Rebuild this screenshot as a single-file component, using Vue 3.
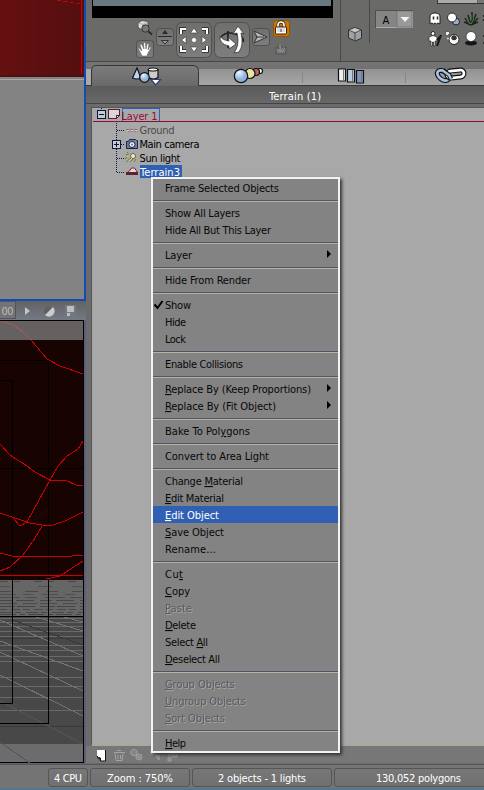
<script setup>
const item = (text, w, extra = {}) => ({ text, w, ...extra })
const groups = [
  [item('Frame Selected Objects', 114)],
  [item('Show All Layers', 75), item('Hide All But This Layer', 106)],
  [item('Layer', 27, { sub: true })],
  [item('Hide From Render', 86)],
  [item('Show', 26, { check: true }), item('Hide', 21), item('Lock', 21)],
  [item('Enable Collisions', 78)],
  [item('Replace By (Keep Proportions)', 146, { sub: true, key: 0 }), item('Replace By (Fit Object)', 111, { sub: true, key: 0 })],
  [item('Bake To Polygons', 85, { key: 11 })],
  [item('Convert to Area Light', 104)],
  [item('Change Material', 78, { key: 7 }), item('Edit Material', 59, { key: 0 }), item('Edit Object', 54, { key: 0, active: true }), item('Save Object', 59, { key: 0 }), item('Rename...', 51)],
  [item('Cut', 18, { key: 2 }), item('Copy', 25, { key: 0 }), item('Paste', 27, { key: 0, off: true }), item('Delete', 31, { key: 0 }), item('Select All', 43, { key: 7 }), item('Deselect All', 55, { key: 0 })],
  [item('Group Objects', 70, { key: 0, off: true }), item('Ungroup Objects', 81, { key: 0, off: true }), item('Sort Objects', 60, { key: 0, off: true })],
  [item('Help', 21, { key: 0 })],
]
const split = (m) => m.key === undefined ? [m.text, '', ''] : [m.text.slice(0, m.key), m.text[m.key], m.text.slice(m.key + 1)]
const dashRows = [
  [581, '8 6 6 14', '#484848'], [586, '10 28 14 20', '#505050'], [591, '11 14 13 9', '#4a4a4a'], [594, '16 7 10 9', '#4e4e4e'],
  [597, '20 5 12 8', '#4b4b4b'], [600, '12 4 18 6', '#474747'], [603, '17 6 14 3', '#4a4a4a'],
  [606, '15 2 18 5', '#444'], [609, '7 4 9 3', '#484848'], [612, '12 3 6 5', '#484848'], [614, '16 4 5 3', '#444'],
]
const rows = [618, 622, 626, 631, 636, 645, 650, 656, 661, 677, 686, 697, 710]
</script>

<template>
  <div class="app">
    <main class="work">
      <section class="left">
        <div class="view top">
          <svg width="84" height="299" viewBox="0 0 84 299">
            <defs><linearGradient id="red" x1="0" x2="1"><stop offset="0" stop-color="#661011" /><stop offset="1" stop-color="#540f0f" /></linearGradient></defs>
            <rect width="84" height="299" fill="#838383" />
            <rect width="84" height="77" fill="url(#red)" />
            <rect y="75" width="84" height="2" fill="#4b100f" />
            <rect y="79" width="84" height="1" fill="#aaa" />
            <path d="M57 .5h4M63 1.500h5M70 2.500h4M76 3.500h4M83 4.500h1M81.500 0V43M81.500 44V74" stroke="#c80000" fill="none" />
          </svg>
        </div>
        <div class="viewbar">
          <span class="frames"><svg width="14" height="16"><text class="ui" x="1.5" y="13" textLength="12">00</text></svg></span>
          <svg width="66" height="18" viewBox="0 0 66 18">
            <path d="M9 6v8l5-4z" fill="#c4c4c4" />
            <circle cx="32.500" cy="10" r="4.500" fill="#606060" /><path d="M29 14 37 6a5 5 0 0 1-8 8z" fill="#ccc" />
            <path d="M49 4h11v12H49z" fill="#737783" /><path d="M51 5h7v6h-7zM51 12h3v3h-3z" fill="#bebebe" />
          </svg>
        </div>
        <svg class="scene" width="86" height="443" viewBox="0 320 86 443" shape-rendering="crispEdges">
          <rect y="320" width="86" height="443" fill="#5b5f78" />
          <rect y="320" width="84" height="443" fill="#000" />
          <rect y="321" width="83" height="19" fill="#666161" />
          <rect y="340" width="83" height="240" fill="#180303" />
          <path d="M32 521 53 500l-8 17z" fill="#2c0504" opacity=".4" />
          <rect y="580" width="83" height="36" fill="#666" />
          <rect y="616" width="83" height="128" fill="#484848" />
          <rect y="744" width="83" height="18" fill="#6c6c6c" />
          <path v-for="[y, dash, color] in dashRows" :key="y" :d="`M0 ${y}.500H83`" :stroke="color" :stroke-dasharray="dash" />
          <path v-for="y in rows" :key="y" :d="`M0 ${y}.500H83`" stroke="#696969" />
          <path d="M0 638.500H83M0 726.500H83" stroke="#393939" />
          <g fill="none" stroke="#747474">
            <path d="M64 617 83 622M36 617 83 631M0 620 83 656M0 641 83 671M0 652 83 691M0 675 83 716" />
            <path d="M12 620 83 645" stroke="#383838" />
            <path d="M0 701 83 744M0 742 30 763" stroke="#555" />
          </g>
          <g fill="none" stroke="#000"><path d="M0 360.500H48.500V723.500H0M0 380.500H12.500V703.500H0M0 468.500H83M0 616.500H83" /></g>
          <path d="M0 321 8 323 15 326 23 332 31 340" fill="none" stroke="#a05a5a" />
          <g fill="none" stroke="#c80000">
            <path d="M31 340 47 359 60 366 83 374M0 444 10 455 27 466 35 472 50 480H65L76 485H83M83 441 78 449 67 456 58 466 50 480 27 522 20 526 13 518M0 513 15 518 30 523 42 525H53L65 521 83 512M0 553 12 556H72L83 555M42 526 35 538 23 555 10 567 0 571M0 575.500H83M46 579 60 576 83 561" />
          </g>
          <rect x="83" y="320" width="1" height="443" fill="#000" />
        </svg>
      </section>

      <section class="right">
        <header class="tools">
          <div class="preview-tools">
            <div class="preview"></div>
            <svg width="254" height="43" viewBox="86 18 254 43">
              <defs>
                <linearGradient id="btn" x1="0" y1="0" x2="0" y2="1"><stop stop-color="#6f6f6d" /><stop offset="1" stop-color="#7e7e7e" /></linearGradient>
              </defs>
              <g stroke="#505050" fill="url(#btn)">
                <rect x="136.500" y="40.500" width="17" height="17" rx="3" /><rect x="156.500" y="28.500" width="17" height="17" rx="3" />
                <rect x="176.500" y="22.500" width="35" height="35" rx="6" /><rect x="214.500" y="22.500" width="35" height="35" rx="6" /><rect x="252.500" y="28.500" width="17" height="17" rx="3" />
                <rect x="273.500" y="20.500" width="16" height="16" rx="3" fill="#cf7400" stroke="#965400" />
              </g>
              <path d="M138 23l4-2.500 6 1v7l-5 2-5-3z" fill="#ddd" stroke="#555" /><path d="M138 23l5 1.500v5M143 24.500l5-2.500" fill="none" stroke="#999" stroke-width=".7" /><circle cx="145.500" cy="28.500" r="3.700" fill="#777" stroke="#333" /><path d="M148.500 31.500l3.500 3" stroke="#2b2b2b" stroke-width="2" />
              <path d="M138 48q1-1 2 1l2 2-2-6q1-2 2 0l2 4-.5-6q1-1 2 0l.5 6 1-5q1-1 2 0l-1 6 2-3q2-1 1 1l-3 5-1 3h-5l-2-4z" fill="#fff" stroke="#555" stroke-width=".5" />
              <path d="M158 36.500h14" stroke="#292929" /><path d="M162 34h6l-3-4z" fill="#2b2b2b" /><path d="M161.500 40.500h7l-3.500 3.500z" fill="#999" stroke="#333" />
              <path d="M181 34v-5h5M202 29h5v5M207 46v5h-5M186 51h-5v-5" fill="none" stroke="#222" stroke-width="3.500" /><path d="M181 34v-5h5M202 29h5v5M207 46v5h-5M186 51h-5v-5" fill="none" stroke="#fff" stroke-width="2" /><path d="M190.500 33h7l-3.500-5zM190.500 47h7l-3.500 5zM186 36.500v7l-4.500-3.500zM202 36.500v7l4.500-3.500z" fill="#fff" stroke="#333" stroke-width=".6" /><circle cx="194" cy="40" r="2.500" fill="#fff" stroke="#333" stroke-width=".5" />
              <path d="M221 37q5-6 14-3 10 3 8 8M228 31v17" stroke="#222" stroke-width="1.700" fill="none" />
              <path d="M220 36q2 4 9 5l-1-4 8 7-7 5v-3q-10-2-9-10z" fill="#fff" stroke="#333" stroke-width=".8" />
              <path d="M233 34l5-8 6 8-3-1q3 12-2 19l-5 1q6-8 3-20z" fill="#fff" stroke="#333" stroke-width=".8" />
              <path d="M254 31l13 6-13 6 3-6z" fill="#b8b8b8" stroke="#333" /><path d="M256 37h8" stroke="#333" />
              <path d="M278 28v-3q0-3 3-3t3 3v3" fill="none" stroke="#222" stroke-width="3" /><path d="M278 28v-3q0-3 3-3t3 3v3" fill="none" stroke="#fff" stroke-width="1.700" /><rect x="275.500" y="27" width="11" height="7" rx="1" fill="#fff" stroke="#352008" /><path d="M277 29h8M277 31h8" stroke="#bbb" /><path d="M281 29v3" stroke="#444" />
              <path d="M276 47l3 2v-5l3 3v3l4-3v7h-10z" fill="#777" stroke="#505050" /><path d="M280 44v6M277 49l3 3 3-4M285 48l-3 4" stroke="#999" fill="none" />
            </svg>
          </div>
          <svg class="library" width="144" height="61" viewBox="340 0 144 61">
            <path d="M340 0V61" stroke="#484848" stroke-width="2" />
            <path d="M369.500 0V43" stroke="#484848" />
            <path d="M437.500 0V3.500H484" fill="none" stroke="#353535" /><path d="M438 0h39v3h-39z" fill="#aaa" /><path d="M478 0h6v3h-6z" fill="#777" />
            <path d="M348.500 30l6-2.500 7 2.500v8l-6 3-7-3z" fill="#9da2a5" stroke="#303030" /><path d="M349 30l6 3 6-3M355 33v8" stroke="#4b4b4b" fill="none" /><path d="M350 30l5-2 5 2-5 2z" fill="#c4c6c8" />
            <rect x="375.500" y="10.500" width="37" height="17" fill="#858585" stroke="#4f4f4f" /><path d="M376 27.500h36.500V11" stroke="#aaa" fill="none" /><rect x="397" y="11" width="15" height="16" fill="#999" stroke="#666" stroke-width=".6" />
            <text class="ui" x="382.500" y="24">A</text><path d="M400.500 17h9l-4.500 5z" fill="#f3f3f3" />
            <path d="M430 24V17q0-4 5-4t5 4v7l-2-1-1.500 1-1.500-1-1.500 1-1.500-1z" fill="#fff" stroke="#222" /><path d="M433.500 16.500v3M437.500 16.500v3" stroke="#222" stroke-width="1.500" />
            <circle cx="456" cy="21.500" r="3.500" fill="#9cabcb" stroke="#222" /><circle cx="452" cy="17.500" r="4.500" fill="#fff" stroke="#222" />
            <path d="M465 18l4 7M468 15l3 10M472 12v13M476 14l-4 11M478 18l-6 7M464 22l7 3 7-3" stroke="#172818" stroke-width="1.500" fill="none" /><path d="M467 20l4 4M474 19l-3 5M471 15v5" stroke="#57794e" fill="none" />
            <circle cx="433" cy="33.500" r="2" fill="#fff" stroke="#222" /><path d="M429 37q4-3 8 0v4h-2v5h-1.500v-4h-1v4H431v-5h-2z" fill="#fff" stroke="#222" stroke-width=".7" /><path d="M441 35l-4 11M437 40l4-4" stroke="#161616" stroke-width="2" />
            <path d="M445.500 31.500h4v2l-2 2h-2z" fill="#eee" stroke="#333" stroke-width=".6" /><circle cx="454" cy="39.500" r="5" fill="#fff" stroke="#222" /><path d="M452 36q4-2 5 2-1 3-4 2t-1-4z" fill="#333" /><circle cx="448" cy="38.500" r="1" fill="#ddd" />
            <ellipse cx="471" cy="43" rx="6" ry="2.500" fill="#151515" /><circle cx="471" cy="36.500" r="5" fill="#fff" stroke="#333" stroke-width=".8" />
            <path d="M483 16h1M483 20h1M483 36h1M483 43h1" stroke="#292929" stroke-width="2" />
          </svg>
        </header>

        <nav class="tabs">
          <svg width="398" height="24" viewBox="86 62 398 24">
            <defs><linearGradient id="tab" x1="0" y1="0" x2="0" y2="1"><stop stop-color="#7c7c7c" /><stop offset="1" stop-color="#696969" /></linearGradient><linearGradient id="idle" x1="0" y1="0" x2="0" y2="1"><stop stop-color="#929292" /><stop offset="1" stop-color="#a7a7a7" /></linearGradient><radialGradient id="ball" cx=".35" cy=".25"><stop stop-color="#eef6ff" /><stop offset="1" stop-color="#8eb3da" /></radialGradient></defs>
            <path d="M86 69h5v16h-5z" fill="#aaa" /><path d="M198 69h286v16H198z" fill="url(#idle)" />
            <path d="M91.500 86V71q0-5.500 5-5.500H193q5.500 0 5.500 6V86z" fill="url(#tab)" stroke="#353535" /><path d="M92 85.500h106" stroke="#696969" /><path d="M86 85.500h5.500M198.500 85.500H484" stroke="#383838" />
            <path d="M302.500 73v10M405.500 73v10" stroke="#858585" />
            <g stroke="#111" stroke-width="1.200">
              <path d="M137 68l4 10q-4 2-8.500 0z" fill="#b8d4ef" /><path d="M148.500 69.500v8q5 3 9.500 0v-8z" fill="#ccc" /><ellipse cx="153" cy="69.500" rx="4.700" ry="1.500" fill="#fff" /><circle cx="144.500" cy="77.500" r="4.800" fill="url(#ball)" /><path d="M151 79.500h9.500l-4.750 5.500z" fill="#fff" stroke="#343b75" />
              <circle cx="260" cy="71" r="2.500" fill="#fff" /><circle cx="256" cy="72" r="3.500" fill="#b76463" /><circle cx="250" cy="73.500" r="5" fill="#eae3a3" /><circle cx="241" cy="76" r="6.700" fill="url(#ball)" />
              <path d="M338.500 69h7v12h-7z" fill="#eee" /><path d="M347.500 69.500h7v12.500h-7z" fill="#b9cbe2" /><path d="M356.500 70.500h7V83h-7z" fill="#8295b6" />
              <path d="M343.500 69.500V81M352.500 70V82M361.500 71V83" stroke="#6e7788" stroke-width="1" />
            </g>
            <g fill="none"><ellipse cx="443" cy="75.500" rx="6.500" ry="4" transform="rotate(38 443 75.500)" stroke="#111" stroke-width="5" /><ellipse cx="443" cy="75.500" rx="6.500" ry="4" transform="rotate(38 443 75.500)" stroke="#a9c3e5" stroke-width="2.700" /><rect x="447" y="70.500" width="17" height="7" rx="3.500" transform="rotate(-6 456 74)" stroke="#111" stroke-width="5" /><rect x="447" y="70.500" width="17" height="7" rx="3.500" transform="rotate(-6 456 74)" stroke="#fff" stroke-width="2.700" /><path d="M443 70l6 5 2 4" stroke="#111" stroke-width="4.500" /><path d="M442 70l7 5 2 4" stroke="#a9c3e5" stroke-width="2.500" /></g>
          </svg>
        </nav>
        <div class="title"><svg width="52" height="16"><text class="ui white" x="0" y="13" textLength="52">Terrain (1)</text></svg></div>

        <div class="tree">
          <svg width="392" height="72" viewBox="92 108 392 72" shape-rendering="crispEdges">
            <path d="M116.500 123V172M117 130.500H124M117 144.500H124M117 158.500H124M117 172.500H124M101.500 108v2" stroke="#111b3d" stroke-dasharray="1 1" fill="none" />
            <rect x="122.500" y="108.500" width="37" height="13" fill="none" stroke="#2b64bc" />
            <rect x="97.500" y="110.500" width="8" height="8" fill="#c8c8c8" stroke="#08153e" stroke-width="1" /><path d="M99 114.500h5" stroke="#08153e" />
            <path d="M108.500 109.500h11v6l-3 3h-8z" fill="#ddd4d7" stroke="#591b30" /><path d="M119 115h-3v3" fill="#fff" stroke="#591b30" />
            <path d="M93 121.500H484" stroke="#8b0d36" />
            <rect x="112.500" y="140.500" width="8" height="8" fill="#ccc" stroke="#08153e" /><path d="M114 144.500h5M116.500 142v5" stroke="#08153e" />
            <g shape-rendering="auto">
              <path d="M126 129.500h11" stroke="#876770" stroke-width="1" stroke-dasharray="3 1" /><path d="M127 130.500h10" stroke="#e0c9cc" stroke-dasharray="2 2" /><path d="M128 131.500h10" stroke="#9d7b84" stroke-dasharray="2 1" />
              <path d="M126.500 141.500h2l1-2h6l1 1h1v8h-11z" fill="#747e9e" stroke="#172648" /><circle cx="132" cy="144.500" r="3" fill="#f0f2f5" stroke="#172648" /><circle cx="132" cy="144.500" r="1" fill="#5e719d" />
              <circle cx="133" cy="156" r="2.500" fill="#efefcc" stroke="#63643a" /><path d="M126 155l3-1M125 159l5-4M126 162l5-4M130 162l3-3M134 162l2-3M127 153l1-1" stroke="#74762f" /><path d="M127 157l3-2M129 161l3-3" stroke="#d5d896" />
              <path d="M126.500 173l3-2 2-3h3l2 3 1 2z" fill="#e7d8dc" stroke="#692c3c" /><path d="M126 172h12v3h-12z" fill="#5b2434" />
              <rect x="140" y="165" width="42" height="13" fill="#3060b4" />
              <text class="ui" x="121.500" y="120" textLength="36" fill="#970c3c">Layer 1</text><text class="ui" x="139.500" y="134" textLength="35" fill="#484848">Ground</text><text class="ui" x="139.500" y="148" textLength="60">Main camera</text><text class="ui" x="139.500" y="162" textLength="41">Sun light</text><text class="ui white" x="140" y="176" textLength="40">Terrain3</text>
            </g>
          </svg>
        </div>
        <footer class="tree-actions">
          <svg width="100" height="17" viewBox="92 747 100 17">
            <path d="M97 751h8v11h-4l-4-4z" fill="#fff" /><path d="M105.500 751v11h-5v-3h-3v-2" stroke="#111" fill="none" /><path d="M97 758h3v4" fill="#333" />
            <path d="M115 754.500l1 7h6l1-7M114 753.500h11M117 751.500h4M118 756v4M120.500 756v4" fill="none" stroke="#a4a4a4" />
            <g fill="#858585" stroke="#a0a0a0"><path d="M131 752l3-2 3 2v3l-3 2-3-2z" /><circle cx="139" cy="758" r="3" /><circle cx="139" cy="758" r="1" /><path d="M151 750h6v5h-6zM156 756h3v5l-3-3zM168 759h3v3h-3zM172 754h5v4h-5zM169 758v-5h3" /></g>
          </svg>
        </footer>
      </section>
    </main>

    <footer class="status">
      <div class="cell cpu"><svg width="28" height="15"><text class="ui white" x="0" y="12" textLength="28">4 CPU</text></svg></div>
      <div class="cell zoom"><svg width="66" height="15"><text class="ui white" x="0" y="12" textLength="66">Zoom : 750%</text></svg></div>
      <div class="cell count"><svg width="88" height="15"><text class="ui white" x="0" y="12" textLength="88">2 objects - 1 lights</text></svg></div>
      <div class="cell polys"><svg width="86" height="15"><text class="ui white" x="0" y="12" textLength="85">130,052 polygons</text></svg></div>
    </footer>

    <div class="menu">
      <div v-for="(group, g) in groups" :key="g" class="group">
        <div v-for="m in group" :key="m.text" class="item" :class="{ active: m.active, off: m.off }">
          <svg class="mark" width="12" height="17"><path v-if="m.check" d="M1.500 8.500l3 3.500 5-7" fill="none" stroke="#000" stroke-width="2" /></svg>
          <svg class="label" width="150" height="17"><text class="ui" x="0" y="13" :textLength="m.w">{{ split(m)[0] }}<tspan class="key">{{ split(m)[1] }}</tspan>{{ split(m)[2] }}</text></svg>
          <svg v-if="m.sub" class="arrow" width="5" height="9"><path d="M0 0v8l4-4z" fill="#000" /></svg>
        </div>
      </div>
    </div>
  </div>
</template>

<style>
body { margin: 0; overflow: hidden; }
</style>

<style scoped>
.app { position: relative; width: 484px; height: 790px; overflow: hidden; background: #6b6b6a; }
svg { display: block; flex: none; }
.ui { font: 11px "DejaVu Sans Condensed", "DejaVu Sans", sans-serif; font-stretch: condensed; white-space: pre; }
.white { fill: #fff; }
.work { display: flex; height: 764px; }
.left { width: 86px; flex: none; background: #606278; }
.top { border-right: 2px solid #114bb8; border-bottom: 2px solid #114bb8; }
.viewbar { display: flex; height: 19px; background: linear-gradient(#626262, #747985); }
.frames { width: 15px; height: 16px; border: solid #50545e; border-width: 1px 1px 1px 0; background: #747474; fill: #bbb; }
.right { width: 398px; display: flex; flex-direction: column; }
.tools { display: flex; height: 61px; border-bottom: 1px solid #484848; background: #6a6a68; }
.preview-tools { width: 254px; flex: none; }
.preview { width: 238px; height: 6px; margin-left: 6px; border-bottom: 12px solid #000; border-left: 1px solid #000; border-right: 2px solid #000; background: #697780; }
.tabs { height: 24px; background: linear-gradient(#747474, #6c6c6c); }
.title { height: 17px; display: flex; justify-content: center; align-items: center; padding: 0 0 0 19px; background: linear-gradient(#5b5b5b, #686868); border-bottom: 1px solid #444; margin-bottom: 4px; }
.tree { height: 637px; margin: -1px 0 0 5px; border-left: 1px solid #575363; border-top: 1px solid #575363; border-bottom: 1px solid #aaa890; background: #a8a8a8; }
.tree-actions { height: 17px; padding-left: 6px; background: #777; }
.status { display: flex; gap: 2px; height: 20px; padding: 3px 0 0 48px; border-top: 1px solid #565656; background: #747474; border-bottom: 2px solid #58748f; }
.cell { display: flex; flex: none; align-items: center; justify-content: center; box-sizing: border-box; height: 19px; border: 1px solid #555; border-radius: 3px; background: linear-gradient(#777, #707070); }
.cpu { width: 40px; }
.zoom { width: 100px; }
.count { width: 140px; }
.polys { width: 170px; }
.menu { position: absolute; left: 151px; top: 177px; width: 185px; border: 2px solid #f3f3f3; background: #838383; box-shadow: 2px 2px 3px #333; }
.group + .group { padding-top: 8px; background: linear-gradient(transparent 4px, #515367 4px, #515367 5px, #b6b2a2 5px, #b6b2a2 6px, transparent 6px); }
.item { display: flex; height: 17px; fill: #080808; }
.item.active { background: #3060b4; fill: #fff; }
.item.off { fill: #59596a; }
.item.off .label { filter: drop-shadow(1px 1px 0 #aaa797); }
.key { text-decoration: underline; }
.arrow { margin: 4px 0 0 12px; }
</style>
